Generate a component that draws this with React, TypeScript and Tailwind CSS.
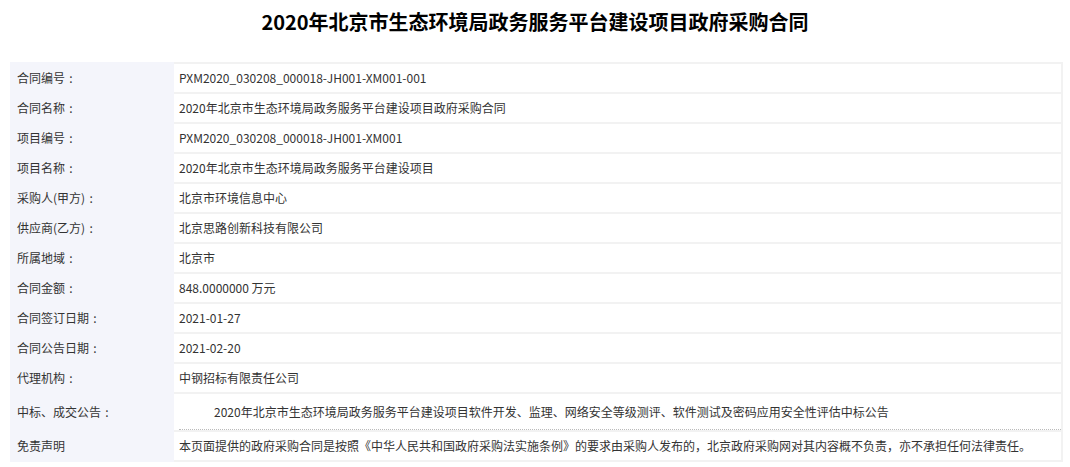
const FONT = { fontFamily: '"Noto Sans CJK SC", "Noto Sans", sans-serif' };

const rows = [
  { label: "合同编号", value: "PXM2020_030208_000018-JH001-XM001-001" },
  { label: "合同名称", value: "2020年北京市生态环境局政务服务平台建设项目政府采购合同" },
  { label: "项目编号", value: "PXM2020_030208_000018-JH001-XM001" },
  { label: "项目名称", value: "2020年北京市生态环境局政务服务平台建设项目" },
  { label: "采购人(甲方)", value: "北京市环境信息中心" },
  { label: "供应商(乙方)", value: "北京思路创新科技有限公司" },
  { label: "所属地域", value: "北京市" },
  { label: "合同金额", value: "848.0000000 万元" },
  { label: "合同签订日期", value: "2021-01-27" },
  { label: "合同公告日期", value: "2021-02-20" },
  { label: "代理机构", value: "中钢招标有限责任公司" },
];

// full-width colon, centred in its box like the original font
const Colon = () => <span className="inline-block w-[12px] text-center">:</span>;

function Row({ label, children }: { label: string; children: React.ReactNode }) {
  return (
    <div className="flex h-[30px]">
      <div className="flex w-[164px] shrink-0 items-center bg-[#f4f5fb] pl-[7px] pt-[2px] text-[#333]">
        {label}
        <Colon />
      </div>
      <div className="flex flex-1 items-center border-t-2 border-r-2 border-[#f2f2f2] bg-white pl-[5px] text-[#333]">
        {children}
      </div>
    </div>
  );
}

export default function App() {
  return (
    <div className="h-[467px] w-[1070px] bg-white text-[12px]" style={FONT}>
      <div className="h-[62px] pt-[9px] text-center text-[20px] font-bold leading-[26px] text-black">
        2020年北京市生态环境局政务服务平台建设项目政府采购合同
      </div>
      <div className="ml-[10px] w-[1053px]">
        {rows.map((r) => (
          <Row key={r.label} label={r.label}>
            {r.value}
          </Row>
        ))}
        <div className="flex h-[38px]">
          <div className="flex w-[164px] shrink-0 items-center bg-[#f4f5fb] pl-[7px] pt-[2px] text-[#333]">
            中标、成交公告
            <Colon />
          </div>
          <div className="flex flex-1 flex-col border-t-2 border-r-2 border-[#f2f2f2] bg-white pl-[5px] text-[#333]">
            <div className="flex flex-1 items-center border-b border-dotted border-[#bbb] pl-[35px]">
              2020年北京市生态环境局政务服务平台建设项目软件开发、监理、网络安全等级测评、软件测试及密码应用安全性评估中标公告
            </div>
          </div>
        </div>
        <div className="flex h-[32px]">
          <div className="flex w-[164px] shrink-0 items-center bg-[#f4f5fb] pl-[7px] text-[#333]">
            免责声明
          </div>
          <div className="flex flex-1 items-center border-y-2 border-r-2 border-[#f2f2f2] bg-white pl-[5px] text-[#333]">
            本页面提供的政府采购合同是按照《中华人民共和国政府采购法实施条例》的要求由采购人发布的，北京政府采购网对其内容概不负责，亦不承担任何法律责任。
          </div>
        </div>
      </div>
    </div>
  );
}
